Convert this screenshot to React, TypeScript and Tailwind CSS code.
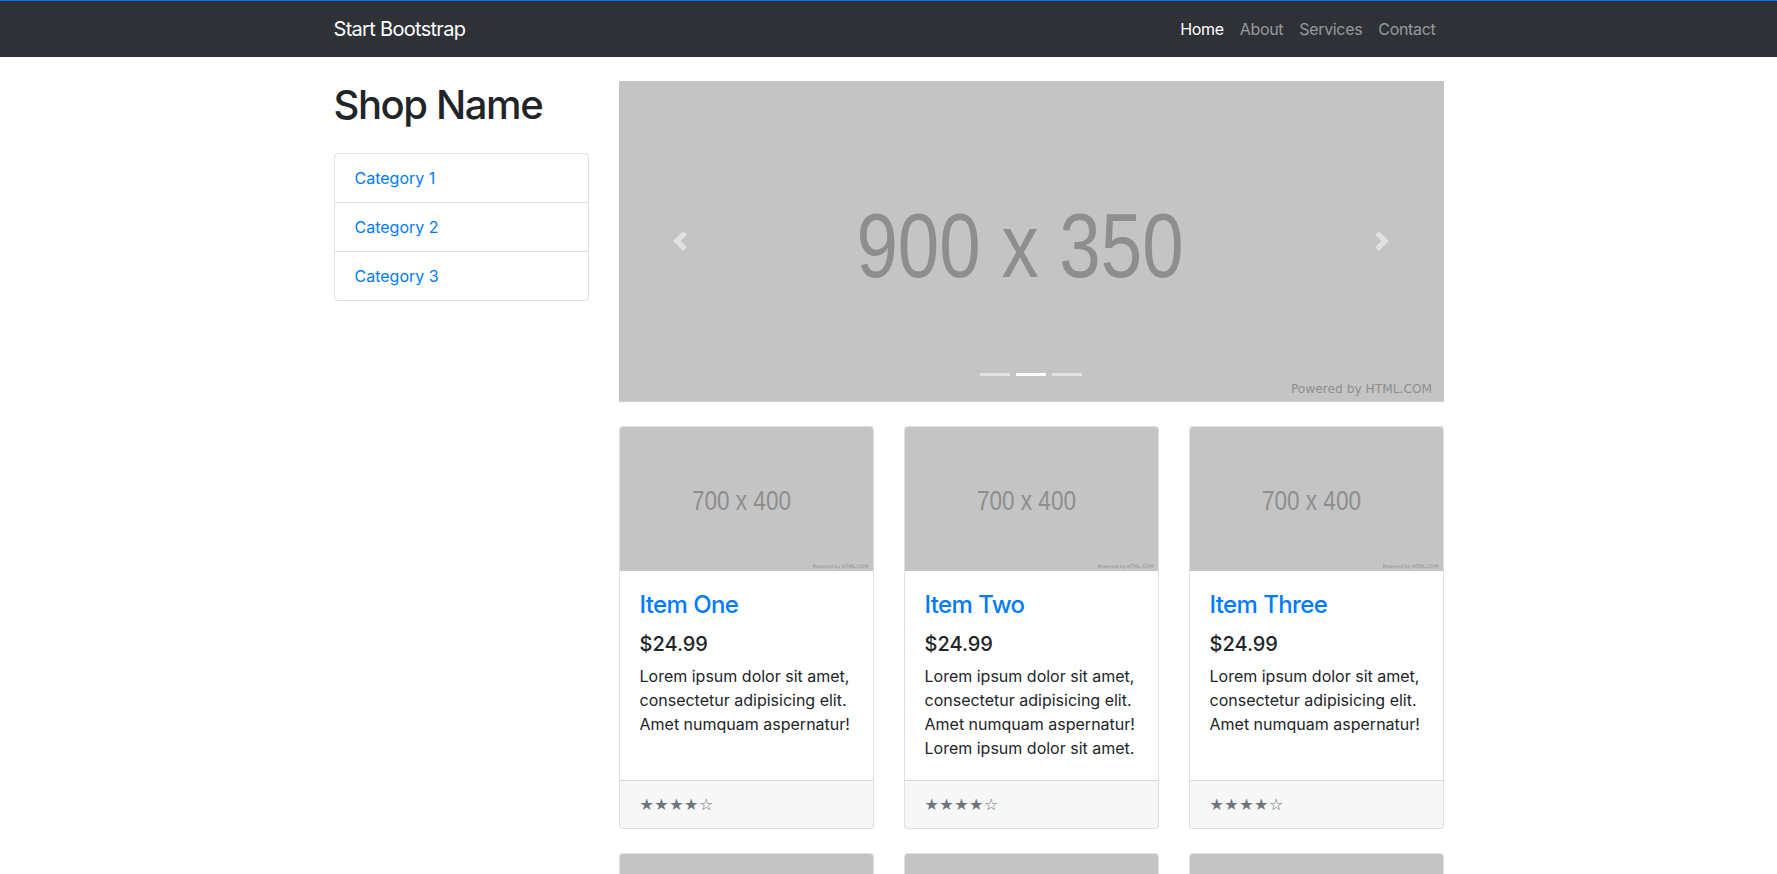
const navLinks = [
  { label: 'Home', active: true },
  { label: 'About', active: false },
  { label: 'Services', active: false },
  { label: 'Contact', active: false },
]

const categories = ['Category 1', 'Category 2', 'Category 3']

const lorem = 'Lorem ipsum dolor sit amet, consectetur adipisicing elit. Amet numquam aspernatur!'

const items = [
  { title: 'Item One', text: lorem },
  { title: 'Item Two', text: lorem + ' Lorem ipsum dolor sit amet.' },
  { title: 'Item Three', text: lorem },
  { title: 'Item Four', text: lorem },
  { title: 'Item Five', text: lorem + ' Lorem ipsum dolor sit amet.' },
  { title: 'Item Six', text: lorem },
]

type PlaceholderProps = {
  w: number
  h: number
  labelX: number
  labelLen: number
  baseline: number
  size: number
}

// grey placeholder picture, like the ones the template pulls from the web
function Placeholder({ w, h, labelX, labelLen, baseline, size }: PlaceholderProps) {
  return (
    <svg viewBox={`0 0 ${w} ${h}`} className="block w-full h-auto" preserveAspectRatio="none">
      <rect width={w} height={h} fill="#c4c4c4" />
      <text
        x={labelX}
        y={baseline}
        fontSize={size}
        fill="#8e8e8e"
        fontFamily="'Liberation Sans', Arial, sans-serif"
        textLength={labelLen}
        lengthAdjust="spacingAndGlyphs"
      >
        {`${w} x ${h}`}
      </text>
      <text
        x={w - 167}
        y={h - 10}
        fontSize={13}
        fill="#8e8e8e"
        fontFamily="'DejaVu Sans', Verdana, sans-serif"
        textLength={154}
        lengthAdjust="spacingAndGlyphs"
      >
        Powered by HTML.COM
      </text>
    </svg>
  )
}

function Carousel() {
  return (
    <div className="relative my-6">
      <Placeholder w={900} h={350} labelX={259} labelLen={357} baseline={214} size={100} />

      {/* prev / next controls */}
      <div className="absolute inset-y-0 left-0 w-[15%] flex items-center justify-center opacity-50">
        <svg width="20" height="20" viewBox="0 0 8 8" fill="#fff">
          <path d="M5.25 0l-4 4 4 4 1.5-1.5-2.5-2.5 2.5-2.5-1.5-1.5z" />
        </svg>
      </div>
      <div className="absolute inset-y-0 right-0 w-[15%] flex items-center justify-center opacity-50">
        <svg width="20" height="20" viewBox="0 0 8 8" fill="#fff">
          <path d="M2.75 0l-1.5 1.5 2.5 2.5-2.5 2.5 1.5 1.5 4-4-4-4z" />
        </svg>
      </div>

      {/* indicators */}
      <div className="absolute left-0 right-0 bottom-[26px] flex justify-center">
        <span className="mx-[3px] w-[30px] h-[3px] bg-white opacity-50" />
        <span className="mx-[3px] w-[30px] h-[3px] bg-white" />
        <span className="mx-[3px] w-[30px] h-[3px] bg-white opacity-50" />
      </div>
    </div>
  )
}

function ItemCard({ title, text }: { title: string; text: string }) {
  return (
    <div className="h-full flex flex-col border border-black/[.125] rounded bg-white">
      <a href="#" className="block overflow-hidden rounded-t-[3px]">
        <Placeholder w={700} h={400} labelX={199} labelLen={274} baseline={230} size={77} />
      </a>
      <div className="flex-1 p-5">
        <h4 className="mb-3 text-2xl leading-[1.2] font-medium tracking-[-0.025em]">
          <a href="#" className="text-[#007bff]">
            {title}
          </a>
        </h4>
        <h5 className="mb-2 text-xl leading-[1.2] font-medium text-[#212529]">$24.99</h5>
        <p className="text-base leading-6 text-[#212529]">{text}</p>
      </div>
      <div className="px-5 py-3 border-t border-black/[.125] bg-black/[.03] rounded-b-[3px] h-[48px]">
        <small className="block font-['DejaVu_Sans',sans-serif] text-[16px] leading-[24px] tracking-[0.5px] text-[#6c757d]">
          &#9733;&#9733;&#9733;&#9733;&#9734;
        </small>
      </div>
    </div>
  )
}

export default function App() {
  return (
    <div className="min-h-screen bg-white font-['Inter','Noto_Sans',sans-serif] text-[#212529]">
      <div className="h-px bg-[#0d6efd]" />
      {/* Navigation */}
      <nav className="h-14 bg-[#2e3237]">
        <div className="w-[1110px] mx-auto h-full flex items-center justify-between">
          <a href="#" className="text-xl leading-[1.5] tracking-[-0.035em] text-white">
            Start Bootstrap
          </a>
          <ul className="flex">
            {navLinks.map((link) => (
              <li key={link.label}>
                <a
                  href="#"
                  className={`block px-2 py-2 text-base leading-6 tracking-[-0.02em] ${
                    link.active ? 'text-white' : 'text-white/50'
                  }`}
                >
                  {link.label}
                </a>
              </li>
            ))}
          </ul>
        </div>
      </nav>

      {/* Page content */}
      <div className="w-[1110px] mx-auto flex gap-[30px]">
        <div className="w-[255px] shrink-0">
          <h1 className="my-6 text-[40px] leading-[1.2] font-medium tracking-[-0.035em]">Shop Name</h1>
          <div className="flex flex-col border border-black/[.125] rounded">
            {categories.map((cat, i) => (
              <a
                key={cat}
                href="#"
                className={`px-5 py-3 text-base leading-6 text-[#007bff] ${
                  i > 0 ? 'border-t border-black/[.125]' : ''
                }`}
              >
                {cat}
              </a>
            ))}
          </div>
        </div>

        <div className="w-[825px] shrink-0">
          <Carousel />
          <div className="grid grid-cols-3 gap-x-[30px] gap-y-6 pb-6">
            {items.map((item) => (
              <ItemCard key={item.title} title={item.title} text={item.text} />
            ))}
          </div>
        </div>
      </div>
    </div>
  )
}
